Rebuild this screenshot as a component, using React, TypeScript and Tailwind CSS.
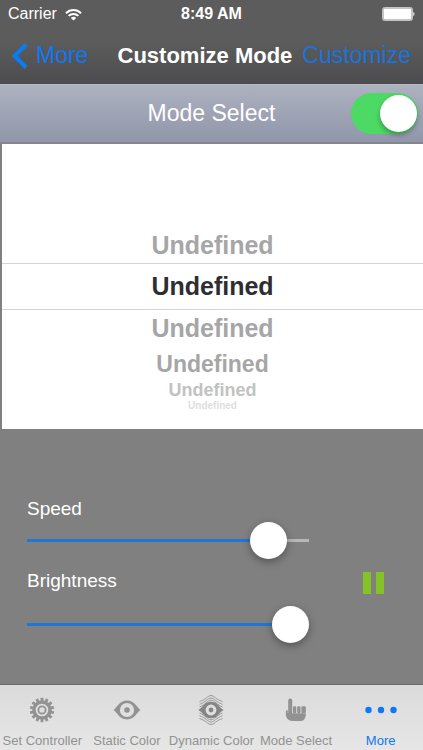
import { useState, type ReactNode } from "react";

function WifiIcon() {
  return (
    <svg width="17" height="13" viewBox="0 0 17 13" fill="none" stroke="white" strokeWidth="2" aria-hidden="true">
      <path d="M1 5.2C5.2 1 11.8 1 16 5.2" />
      <path d="M3.6 7.9c2.8-2.7 7-2.7 9.8 0" />
      <path d="M8.5 12.6 5.8 9.9c1.5-1.4 3.9-1.4 5.4 0z" fill="white" stroke="none" />
    </svg>
  );
}

function BatteryIcon() {
  return (
    <svg width="33" height="14" viewBox="0 0 33 14" aria-hidden="true">
      <rect x="0.5" y="0.5" width="30" height="13" rx="2" fill="#8a8a8a" stroke="#c4c4c4" />
      <rect x="1.5" y="1.5" width="28" height="11" rx="1" fill="white" />
      <path d="M31.3 5v4c1.6-.6 1.6-3.4 0-4z" fill="white" />
    </svg>
  );
}

function GearIcon() {
  const teeth = Array.from({ length: 14 }, (_, i) => (i * 360) / 14);
  return (
    <svg width="26" height="26" viewBox="-13 -13 26 26" aria-hidden="true">
      {teeth.map((angle) => (
        <rect key={angle} x="-1.4" y="-12.2" width="2.8" height="4" rx="0.5" fill="#929292" transform={`rotate(${angle})`} />
      ))}
      <circle r="8" fill="none" stroke="#929292" strokeWidth="3.4" />
      <circle r="3.6" fill="none" stroke="#929292" strokeWidth="1.8" />
    </svg>
  );
}

function EyeIcon() {
  return (
    <svg width="28" height="26" viewBox="-14 -13 28 26" aria-hidden="true">
      <path
        fillRule="evenodd"
        fill="#929292"
        d="M-13.5 0C-10-2-8-9.4 0-9.4S10-2 13.5 0C10 2 8 9.4 0 9.4S-10 2-13.5 0zM-7.1 0a7.1 7.1 0 1 0 14.2 0a7.1 7.1 0 1 0-14.2 0z"
      />
      <circle r="2.8" fill="#929292" />
    </svg>
  );
}

function DynamicEyeIcon() {
  return (
    <svg width="28" height="30" viewBox="-14 -15 28 30" fill="none" stroke="#999999" strokeWidth="1" aria-hidden="true">
      <path d="M-11.5-8.5C-5-10.5-3-14.5 0-14.5S5-10.5 11.5-8.5M-11.5-5.7C-5.5-7.7-3-12 0-12S5.5-7.7 11.5-5.7M-11.5-3C-6-5-3.5-9.8 0-9.8S6-5 11.5-3" />
      <path d="M-11.5 8.5C-5 10.5-3 14.5 0 14.5S5 10.5 11.5 8.5M-11.5 5.7C-5.5 7.7-3 12 0 12S5.5 7.7 11.5 5.7M-11.5 3C-6 5-3.5 9.8 0 9.8S6 5 11.5 3" />
      <path
        fillRule="evenodd"
        fill="#858585"
        stroke="none"
        d="M-12.8 0C-8-2-7-8.2 0-8.2S8-2 12.8 0C8 2 7 8.2 0 8.2S-8 2-12.8 0zM-5.4 0a5.4 5.4 0 1 0 10.8 0a5.4 5.4 0 1 0-10.8 0z"
      />
      <circle r="2.4" fill="#858585" stroke="none" />
    </svg>
  );
}

function HandIcon() {
  return (
    <svg width="22" height="24" viewBox="0 0 22 24" fill="#929292" aria-hidden="true">
      <rect x="3.2" y="0.5" width="4" height="17" rx="2" />
      <rect x="8" y="8.3" width="3.3" height="7" rx="1.2" />
      <rect x="12.2" y="8.3" width="3.3" height="7" rx="1.2" />
      <rect x="16.4" y="8.3" width="4.4" height="7" rx="1.2" />
      <path d="M.8 14c0-1.5 1.400-1.900 2-1.500v2.800h18c.2 4.600-1.600 7.700-4.800 7.700H7.500C3.500 23 .8 20 .8 16z" />
    </svg>
  );
}

function DotsIcon() {
  return (
    <svg width="34" height="8" viewBox="0 0 34 8" fill="#0f78f2" aria-hidden="true">
      <circle cx="4.5" cy="4" r="3.2" />
      <circle cx="17" cy="4" r="3.2" />
      <circle cx="29.5" cy="4" r="3.2" />
    </svg>
  );
}

type SliderProps = { id: string; label: string; initial: number; spacing: string };

function Slider({ id, label, initial, spacing }: SliderProps) {
  const [value, setValue] = useState(initial);
  return (
    <div className={`flex flex-col ${spacing}`}>
      <label htmlFor={id} className="text-[19px] leading-6 text-white">
        {label}
      </label>
      <input
        id={id}
        type="range"
        min={0}
        max={100}
        value={value}
        onChange={(e) => setValue(Number(e.target.value))}
        className="m-0 block h-10 w-full cursor-pointer appearance-none bg-[length:100%_3px] bg-center bg-no-repeat [&::-webkit-slider-thumb]:size-[37px] [&::-webkit-slider-thumb]:appearance-none [&::-webkit-slider-thumb]:rounded-full [&::-webkit-slider-thumb]:bg-white [&::-webkit-slider-thumb]:shadow-[0_3px_8px_rgba(0,0,0,0.35)]"
        style={{ backgroundImage: `linear-gradient(to right, #2075d8 ${value}%, #b7b7b7 ${value}%)` }}
      />
    </div>
  );
}

function Tab({ label, active = false, children }: { label: string; active?: boolean; children: ReactNode }) {
  return (
    <button
      type="button"
      aria-current={active ? "page" : undefined}
      className={`flex min-w-0 flex-1 flex-col items-center ${active ? "text-[#0f78f2]" : "text-[#929292]"}`}
    >
      <span className="flex h-12 items-center pt-0.5">{children}</span>
      <span className="text-[13px] leading-4 whitespace-nowrap">{label}</span>
    </button>
  );
}

export default function App() {
  const [on, setOn] = useState(true);
  return (
    <div className="flex min-h-screen flex-col bg-[#808080] font-['Liberation_Sans',Arial,sans-serif]">
      <header className="border-b border-[#4a4a4c] bg-linear-to-b from-[#5c5c5c] from-50% to-[#4d4d4f] text-white">
        <div className="grid h-7 grid-cols-3 items-center px-2 text-base leading-7">
          <div className="flex items-center gap-2">
            <span>Carrier</span>
            <WifiIcon />
          </div>
          <div className="text-center font-bold whitespace-nowrap">8:49 AM</div>
          <div className="flex justify-end">
            <BatteryIcon />
          </div>
        </div>
        <nav className="flex h-[55px] items-center justify-between px-3 text-[23px] whitespace-nowrap">
          <button type="button" className="flex items-center gap-2 text-[#0f78f2]">
            <svg width="16" height="26" viewBox="0 0 16 26" fill="none" stroke="#0a7cf5" strokeWidth="4" aria-hidden="true">
              <path d="M14.2 1.5 2.7 13l11.5 11.5" />
            </svg>
            More
          </button>
          <h1 className="ml-auto pr-2.5 text-[22px] font-bold">Customize Mode</h1>
          <button type="button" className="text-[#1a73dc]">
            Customize
          </button>
        </nav>
      </header>

      <div className="grid h-[60px] grid-cols-[1fr_auto_1fr] items-center border-t border-b-2 border-t-[#b8bbc6] border-b-[#84868d] bg-linear-to-b from-[#adb1c0] to-[#9097aa] px-[5px]">
        <label htmlFor="mode-select" className="col-start-2 pb-0.5 text-[23px] leading-7 text-white">
          Mode Select
        </label>
        <input
          id="mode-select"
          type="checkbox"
          role="switch"
          checked={on}
          onChange={(e) => setOn(e.target.checked)}
          className="flex h-[41px] w-[67px] cursor-pointer appearance-none items-center justify-self-end rounded-full bg-[#c9ccd4] px-px before:block before:size-[37px] before:rounded-full before:bg-white before:shadow-[0_3px_5px_rgba(0,0,0,0.3)] checked:justify-end checked:bg-[#4cd964]"
        />
      </div>

      <div
        role="listbox"
        aria-label="Mode"
        className="ml-0.5 flex h-[285px] shrink-0 flex-col bg-white pt-[83px] text-center text-[25px] font-bold text-[#a6a6a6]"
      >
        <div role="option" aria-selected="false" className="h-9 leading-9">Undefined</div>
        <div role="option" aria-selected="true" className="h-[47px] border-y border-[#d4d4d4] leading-[45px] text-[#2e2e30]">Undefined</div>
        <div role="option" aria-selected="false" className="h-9 leading-9">Undefined</div>
        <div role="option" aria-selected="false" className="h-9 text-[23px] leading-9">Undefined</div>
        <div role="option" aria-selected="false" className="h-4 text-[18px] leading-4 text-[#c2c2c2]">Undefined</div>
        <div role="option" aria-selected="false" className="h-4 text-[10px] leading-4 text-[#dedede]">Undefined</div>
      </div>

      <main className="flex flex-1 items-center px-[27px]">
        <div className="flex w-[282px] max-w-[77%] flex-col gap-2 pt-7">
          <Slider id="speed" label="Speed" initial={91} spacing="gap-0" />
          <Slider id="brightness" label="Brightness" initial={100} spacing="gap-3" />
        </div>
        <button type="button" aria-label="Pause" className="ml-auto flex gap-[5px] pt-[52px] pr-3">
          <span className="h-[22px] w-2 bg-[#84c225]" />
          <span className="h-[22px] w-2 bg-[#84c225]" />
        </button>
      </main>

      <footer className="flex h-[66px] border-t border-[#6a6a6a] bg-linear-to-b from-[#dbdbdb] to-[#e6e6e6]">
        <Tab label="Set Controller">
          <GearIcon />
        </Tab>
        <Tab label="Static Color">
          <EyeIcon />
        </Tab>
        <Tab label="Dynamic Color">
          <DynamicEyeIcon />
        </Tab>
        <Tab label="Mode Select">
          <HandIcon />
        </Tab>
        <Tab label="More" active>
          <DotsIcon />
        </Tab>
      </footer>
    </div>
  );
}
